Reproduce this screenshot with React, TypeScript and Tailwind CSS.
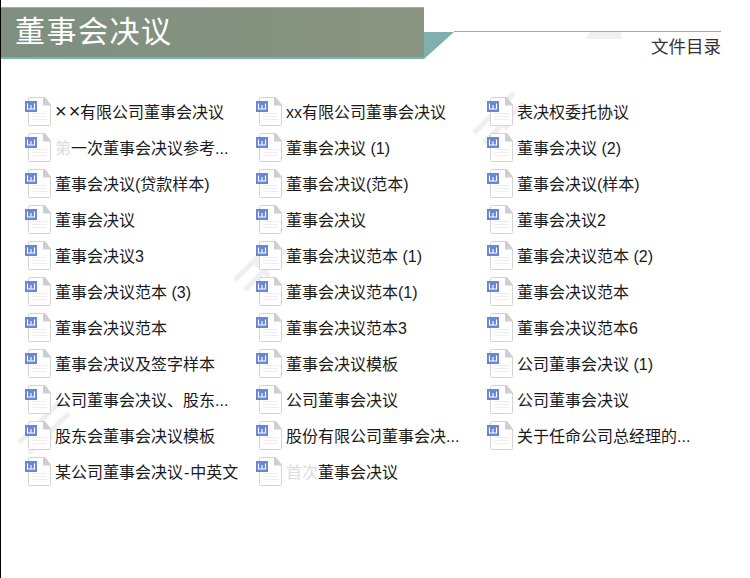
const files: { faded?: string; label: string }[] = [
  { label: '有限公司董事会决议' },
  { label: 'xx有限公司董事会决议' },
  { label: '表决权委托协议' },
  { faded: '第', label: '一次董事会决议参考...' },
  { label: '董事会决议 (1)' },
  { label: '董事会决议 (2)' },
  { label: '董事会决议(贷款样本)' },
  { label: '董事会决议(范本)' },
  { label: '董事会决议(样本)' },
  { label: '董事会决议' },
  { label: '董事会决议' },
  { label: '董事会决议2' },
  { label: '董事会决议3' },
  { label: '董事会决议范本 (1)' },
  { label: '董事会决议范本 (2)' },
  { label: '董事会决议范本 (3)' },
  { label: '董事会决议范本(1)' },
  { label: '董事会决议范本' },
  { label: '董事会决议范本' },
  { label: '董事会决议范本3' },
  { label: '董事会决议范本6' },
  { label: '董事会决议及签字样本' },
  { label: '董事会决议模板' },
  { label: '公司董事会决议 (1)' },
  { label: '公司董事会决议、股东...' },
  { label: '公司董事会决议' },
  { label: '公司董事会决议' },
  { label: '股东会董事会决议模板' },
  { label: '股份有限公司董事会决...' },
  { label: '关于任命公司总经理的...' },
  { label: '某公司董事会决议-中英文' },
  { faded: '首次', label: '董事会决议' },
]

function WordIcon() {
  return (
    <svg width="28" height="30" viewBox="0 0 28 30" fill="none" className="shrink-0">
      <path d="M3.5 1.5a1 1 0 0 1 1-1h15.5l5.5 7.5v19.5a1 1 0 0 1-1 1H4.5a1 1 0 0 1-1-1z" fill="#fff" stroke="#d4d4d6" />
      <path d="M18 .5h2l6 8h-8z" fill="#cdced2" />
      <path d="M7 16.5h15M7 19.5h15M7 22.5h15" stroke="#eeeef1" />
      <rect x="0" y="4" width="12" height="11" fill="#6a87d6" />
      <path d="M2.5 6.5v5.5h7v-5.5M6 8v4" stroke="#fff" strokeWidth="1.1" />
    </svg>
  )
}

// faint smudges left by the photo's watermark
function Smudge({ className }: { className: string }) {
  return (
    <svg width="70" height="70" viewBox="0 0 70 70" fill="none" stroke="#efefef" strokeWidth="5" className={`absolute ${className}`}>
      <path d="M8 48L48 8M18 58L58 18M28 30l14 14" />
    </svg>
  )
}

export default function App() {
  return (
    <div className="relative w-[750px] h-[578px] overflow-hidden bg-white border-l border-black font-['Liberation_Sans','Noto_Sans_CJK_SC',sans-serif]">
      <Smudge className="left-[226px] top-[232px]" />
      <Smudge className="left-[10px] top-[395px]" />
      <Smudge className="left-[465px] top-[85px]" />
      <svg width="36" height="8" viewBox="0 0 36 8" className="absolute left-[585px] top-[31px]">
        <polygon points="4,0 34,0 36,8 0,8" fill="#f1f1f1" />
      </svg>

      <header className="relative flex pt-[7px]">
        <div className="w-[423px] h-[52px] bg-gradient-to-r from-[#7e8f80] to-[#8a9481] border-t border-[#a3ae9f] border-b-2 border-b-[#6fb4c0] pl-[14px] pt-[6px] text-[30px] leading-[36px] tracking-[1.5px] text-white">
          董事会决议
        </div>
        <svg width="30" height="27" viewBox="0 0 30 27" className="mt-[25px] shrink-0">
          <polygon points="0,0 30,0 0,27" fill="#7fb0ae" />
        </svg>
        <div className="w-[267px] flex flex-col items-end">
          <div className="mt-[24px] w-full h-px bg-[#8fb0bc]" />
          <div className="mt-[5px] text-[17.5px] leading-[20px] text-[#333333]">文件目录</div>
        </div>
      </header>

      <main className="relative grid grid-cols-[231px_231px_231px] auto-rows-[36px] pl-[24px] pt-[38px]">
        {files.map((f, i) => (
          <div key={i} className="flex items-start gap-[2px]">
            <WordIcon />
            <span className="mt-[6px] text-[16px] leading-[20px] whitespace-nowrap text-[#1a1a1a]">
              {i === 0 && <span className="inline-block w-[25px] text-[20px] leading-[16px] tracking-[2px]">××</span>}
              {f.faded && <span className="text-[#dcdcdc]">{f.faded}</span>}
              {i === 30 ? (
                <>
                  某公司董事会决议<span className="px-[1px]">-</span>中英文
                </>
              ) : (
                f.label
              )}
            </span>
          </div>
        ))}
      </main>
    </div>
  )
}
